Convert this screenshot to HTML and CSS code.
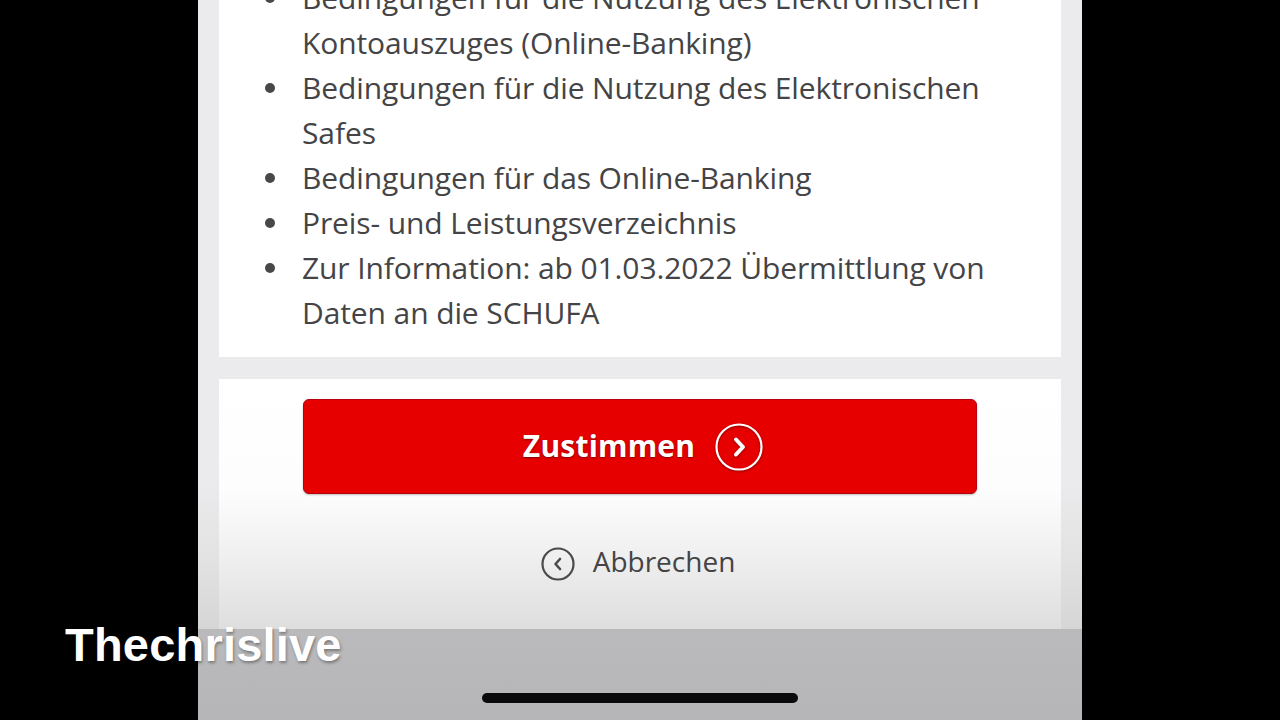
FILE: index.html
```html
<!DOCTYPE html>
<html lang="de">
<head>
<meta charset="utf-8">
<title>Zustimmen</title>
<link rel="stylesheet" href="styles.css">
</head>
<body>
<div class="screen">
  <section class="card">
    <ul class="terms">
      <li>Bedingungen für die Nutzung des Elektronischen Kontoauszuges (Online-Banking)</li>
      <li>Bedingungen für die Nutzung des Elektronischen Safes</li>
      <li>Bedingungen für das Online-Banking</li>
      <li>Preis- und Leistungsverzeichnis</li>
      <li>Zur Information: ab 01.03.2022 Übermittlung von Daten an die SCHUFA</li>
    </ul>
  </section>
  <section class="actions">
    <button class="btn-primary" type="button">
      <span>Zustimmen</span>
      <svg class="icon-next" width="48" height="48" viewBox="0 0 48 48" aria-hidden="true">
        <circle cx="24" cy="24" r="22.5" fill="none" stroke="#fff" stroke-width="2.2"/>
        <path d="M21 16.5 L28 24 L21 31.5" fill="none" stroke="#fff" stroke-width="4" stroke-linecap="round" stroke-linejoin="round"/>
      </svg>
    </button>
    <a class="btn-cancel" href="#">
      <svg class="icon-back" width="34" height="34" viewBox="0 0 34 34" aria-hidden="true">
        <circle cx="17" cy="17" r="15.5" fill="none" stroke="#4a4a4c" stroke-width="2.2"/>
        <path d="M19 12 L14.5 17 L19 22" fill="none" stroke="#4a4a4c" stroke-width="2.6" stroke-linecap="round" stroke-linejoin="round"/>
      </svg>
      <span>Abbrechen</span>
    </a>
  </section>
  <div class="home-area">
    <div class="home-indicator"></div>
  </div>
</div>
<div class="watermark">Thechrislive</div>
</body>
</html>
```

FILE: styles.css
```css
html, body {
  margin: 0;
  padding: 0;
}
body {
  width: 1280px;
  height: 720px;
  background: #000;
  overflow: hidden;
  position: relative;
  font-family: "Open Sans", "Noto Sans", sans-serif;
}
.screen {
  width: 884px;
  height: 720px;
  margin: 0 auto;
  background: linear-gradient(to bottom, #ebeaec 0px, #ebeaec 480px, #e2e2e3 560px, #d6d6d7 628px);
  display: flex;
  flex-direction: column;
  overflow: hidden;
}
.card {
  margin: -25px 21px 0;
  background: #fff;
  padding: 0 0 22px;
}
.terms {
  list-style: none;
  margin: 0;
  padding: 0 30px 0 83px;
  color: #444446;
  font-size: 30px;
  font-weight: 500;
  line-height: 45px;
  letter-spacing: -0.1px;
}
.terms li {
  position: relative;
}
.terms li::before {
  content: "";
  position: absolute;
  left: -37px;
  top: 18px;
  width: 10px;
  height: 10px;
  border-radius: 50%;
  background: #48484a;
}
.actions {
  margin: 22px 21px 0;
  height: 250px;
  background: linear-gradient(to bottom, #ffffff 0px, #fdfdfd 110px, #f1f1f1 170px, #dedede 250px);
  display: flex;
  flex-direction: column;
  align-items: center;
  padding-top: 20px;
  box-sizing: border-box;
}
.btn-primary {
  width: 674px;
  height: 95px;
  border: 1px solid #b80010;
  border-radius: 6px;
  background: #e60000;
  box-shadow: 0 1px 2px rgba(0,0,0,0.25);
  color: #fff;
  font-family: "Open Sans", "Noto Sans", sans-serif;
  font-weight: 700;
  font-size: 30px;
  display: flex;
  align-items: center;
  justify-content: center;
  gap: 20px;
  padding: 0 0 0 6px;
  text-shadow: 0 1px 2px rgba(80,0,0,0.7);
  cursor: pointer;
}
.btn-primary span {
  position: relative;
  top: -1px;
  letter-spacing: 0.2px;
}
.icon-next {
  display: block;
  filter: drop-shadow(0 1px 1px rgba(80,0,0,0.6));
}
.btn-cancel {
  margin-top: 47px;
  display: flex;
  align-items: center;
  gap: 18px;
  color: #444446;
  text-decoration: none;
  font-size: 28px;
  font-weight: 500;
  margin-left: -4px;
}
.icon-back {
  display: block;
  margin-top: 6px;
}
.home-area {
  flex: 1;
  background: linear-gradient(to bottom, #bab9bb, #b6b5b7);
  display: flex;
  justify-content: center;
  align-items: flex-start;
}
.home-indicator {
  width: 316px;
  height: 10px;
  border-radius: 5px;
  background: #0a0a0c;
  margin-top: 64px;
}
.watermark {
  position: absolute;
  left: 65px;
  top: 617px;
  color: #fff;
  font-family: "Liberation Sans", Arial, sans-serif;
  font-weight: 700;
  font-size: 47px;
  letter-spacing: 0.2px;
  text-shadow: 1px 2px 3px rgba(0,0,0,0.35);
}
```
